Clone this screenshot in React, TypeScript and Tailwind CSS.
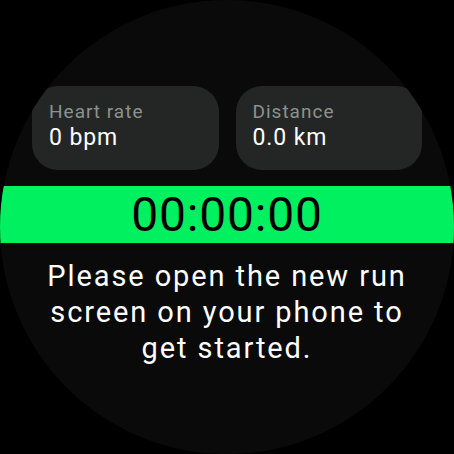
import React from 'react';

const stats = [
  { label: 'Heart rate', value: '0 bpm' },
  { label: 'Distance', value: '0.0 km' },
];

export default function App() {
  return (
    <div className="w-[454px] h-[454px] bg-black" style={{ fontFamily: 'Roboto, "Liberation Sans", sans-serif' }}>
      <div className="w-full h-full rounded-full bg-[#0a0a0a] overflow-hidden flex flex-col pt-[86px]">
        <div className="flex gap-[17px] px-[32px]">
          {stats.map(stat => (
            <div key={stat.label} className="flex-1 h-[84px] rounded-[26px] bg-[#242626] pl-[17px] pt-[14px]">
              <p className="text-[19px] leading-[24px] tracking-[1px] text-[#8a938f]">{stat.label}</p>
              <p className="text-[23px] leading-[28px] tracking-[0.9px] text-white">{stat.value}</p>
            </div>
          ))}
        </div>
        <div className="mt-[16px] h-[57px] bg-[#00f060] flex items-center justify-center">
          <span className="text-[48px] leading-none tracking-[0.8px] text-black">00:00:00</span>
        </div>
        <p className="mt-[15px] px-[38px] text-center text-[29px] leading-[36px] tracking-[1.9px] text-white">
          Please open the new run screen on your phone to get started.
        </p>
      </div>
    </div>
  );
}
